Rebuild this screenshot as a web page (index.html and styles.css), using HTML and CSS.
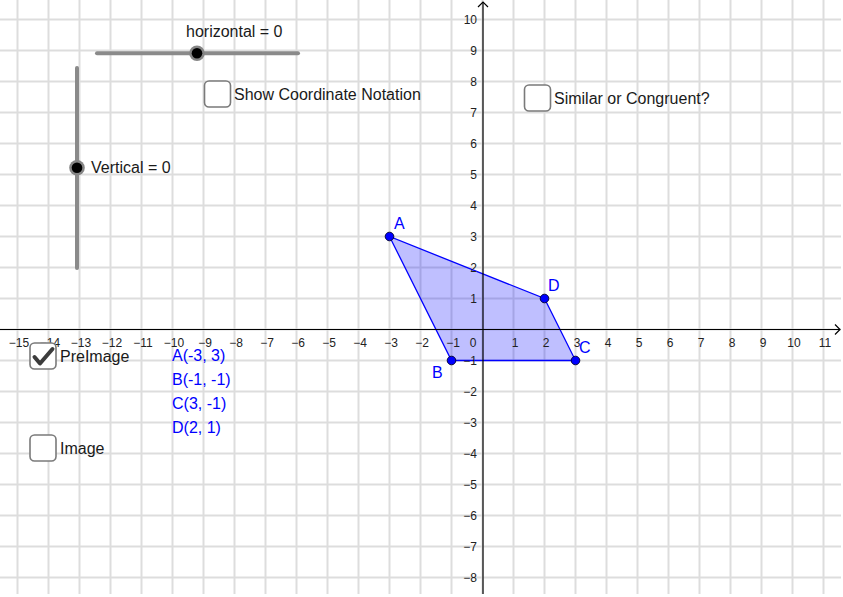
FILE: index.html
```html
<!DOCTYPE html>
<html>
<head>
<meta charset="utf-8">
<link rel="stylesheet" href="styles.css">
</head>
<body>
<div class="canvas">
<svg class="graph" width="841" height="594" viewBox="0 0 841 594" xmlns="http://www.w3.org/2000/svg">
  <defs>
    <pattern id="grid" patternUnits="userSpaceOnUse" x="16.5" y="18.5" width="31" height="31">
      <rect class="gridline" x="0" y="0" width="2" height="31"/>
      <rect class="gridline" x="0" y="0" width="31" height="2"/>
    </pattern>
  </defs>
  <rect x="0" y="0" width="841" height="594" fill="url(#grid)"/>

  <!-- polygon -->
  <polygon class="poly" points="389.5,236.5 451.5,360.5 575.5,360.5 544.5,298.5"/>

  <!-- axes -->
  <line class="axis" x1="0" y1="329.5" x2="840" y2="329.5"/>
  <polyline class="axis" points="835,324.5 840,329.5 835,334.5"/>
  <line class="axis" x1="483" y1="594" x2="483" y2="2"/>
  <polyline class="axis" points="478,7 483,2 488,7"/>

  <!-- x tick labels -->
  <g class="tick xt">
    <text x="19" y="347">−15</text>
    <text x="50" y="347">−14</text>
    <text x="81" y="347">−13</text>
    <text x="112" y="347">−12</text>
    <text x="143" y="347">−11</text>
    <text x="174" y="347">−10</text>
    <text x="205" y="347">−9</text>
    <text x="236" y="347">−8</text>
    <text x="267" y="347">−7</text>
    <text x="298" y="347">−6</text>
    <text x="329" y="347">−5</text>
    <text x="360" y="347">−4</text>
    <text x="391" y="347">−3</text>
    <text x="422" y="347">−2</text>
    <text x="453" y="347">−1</text>
    <text x="473" y="347">0</text>
    <text x="515" y="347">1</text>
    <text x="546" y="347">2</text>
    <text x="577" y="347">3</text>
    <text x="608" y="347">4</text>
    <text x="639" y="347">5</text>
    <text x="670" y="347">6</text>
    <text x="701" y="347">7</text>
    <text x="732" y="347">8</text>
    <text x="763" y="347">9</text>
    <text x="794" y="347">10</text>
    <text x="825" y="347">11</text>
  </g>
  <!-- y tick labels -->
  <g class="tick yt">
    <text x="477" y="24">10</text>
    <text x="477" y="55">9</text>
    <text x="477" y="86">8</text>
    <text x="477" y="117">7</text>
    <text x="477" y="148">6</text>
    <text x="477" y="179">5</text>
    <text x="477" y="210">4</text>
    <text x="477" y="241">3</text>
    <text x="477" y="272">2</text>
    <text x="477" y="303">1</text>
    <text x="477" y="365">−1</text>
    <text x="477" y="396">−2</text>
    <text x="477" y="427">−3</text>
    <text x="477" y="458">−4</text>
    <text x="477" y="489">−5</text>
    <text x="477" y="520">−6</text>
    <text x="477" y="551">−7</text>
    <text x="477" y="582">−8</text>
  </g>

  <!-- points -->
  <circle class="pt" cx="389.5" cy="236.5" r="4.3"/>
  <circle class="pt" cx="451.5" cy="360.5" r="4.3"/>
  <circle class="pt" cx="575.5" cy="360.5" r="4.3"/>
  <circle class="pt" cx="544.5" cy="298.5" r="4.3"/>
  <g class="ptlabel">
    <text x="394" y="229">A</text>
    <text x="432" y="378">B</text>
    <text x="579" y="353">C</text>
    <text x="548" y="291">D</text>
  </g>

  <!-- coordinate list -->
  <g class="coords">
    <text x="172" y="361">A(-3, 3)</text>
    <text x="172" y="385">B(-1, -1)</text>
    <text x="172" y="409">C(3, -1)</text>
    <text x="172" y="433">D(2, 1)</text>
  </g>

  <!-- horizontal slider -->
  <line class="slider" x1="97" y1="53.3" x2="298" y2="53.3"/>
  <circle class="knob-ring" cx="197" cy="53.3" r="7.8"/>
  <circle class="knob" cx="197" cy="53.3" r="5.3"/>
  <text class="wtext" x="186" y="37">horizontal = 0</text>

  <!-- vertical slider -->
  <line class="slider" x1="77" y1="68" x2="77" y2="268"/>
  <circle class="knob-ring" cx="77" cy="167.7" r="7.8"/>
  <circle class="knob" cx="77" cy="167.7" r="5.3"/>
  <text class="wtext" x="91" y="173">Vertical = 0</text>

  <!-- checkboxes -->
  <rect class="cb" x="204.5" y="81" width="26" height="26" rx="4.5"/>
  <text class="wtext" x="234" y="99.5">Show Coordinate Notation</text>

  <rect class="cb" x="524.5" y="85" width="26" height="26" rx="4.5"/>
  <text class="wtext" x="554" y="103.5">Similar or Congruent?</text>

  <rect class="cb" x="30" y="343" width="26" height="26" rx="4.5"/>
  <polyline class="check" points="34.5,357 40,363.5 52.5,349"/>
  <text class="wtext" x="60" y="361.5">PreImage</text>

  <rect class="cb" x="30" y="435" width="26" height="26" rx="4.5"/>
  <text class="wtext" x="60" y="453.5">Image</text>
</svg>
</div>
</body>
</html>
```
FILE: styles.css
```css
html, body {
  margin: 0;
  padding: 0;
  background: #ffffff;
}
.canvas {
  width: 843px;
  height: 597px;
  overflow: hidden;
  background: #ffffff;
}
.graph {
  display: block;
  font-family: "Liberation Sans", Arial, sans-serif;
}
.gridline {
  fill: #dddddd;
}
.axis {
  stroke: #000000;
  stroke-width: 1.2;
  fill: none;
}
.poly {
  fill: rgba(0, 0, 255, 0.25);
  stroke: #0000ff;
  stroke-width: 1.3;
}
.tick text {
  font-size: 12px;
  fill: #222222;
}
.xt text {
  text-anchor: middle;
}
.yt text {
  text-anchor: end;
}
.pt {
  fill: #0000ff;
  stroke: #00002a;
  stroke-width: 0.9;
}
.ptlabel text {
  font-size: 16px;
  fill: #0000ff;
}
.coords text {
  font-size: 16px;
  fill: #0000ff;
}
.slider {
  stroke: #8a8a8a;
  stroke-width: 4;
  stroke-linecap: round;
}
.knob-ring {
  fill: #858585;
}
.knob {
  fill: #000000;
}
.wtext {
  font-size: 16px;
  fill: #1a1a1a;
}
.cb {
  fill: #ffffff;
  stroke: #7a7a7a;
  stroke-width: 1.6;
}
.check {
  fill: none;
  stroke: #3c3c3c;
  stroke-width: 4;
  stroke-linecap: round;
  stroke-linejoin: round;
}
```
